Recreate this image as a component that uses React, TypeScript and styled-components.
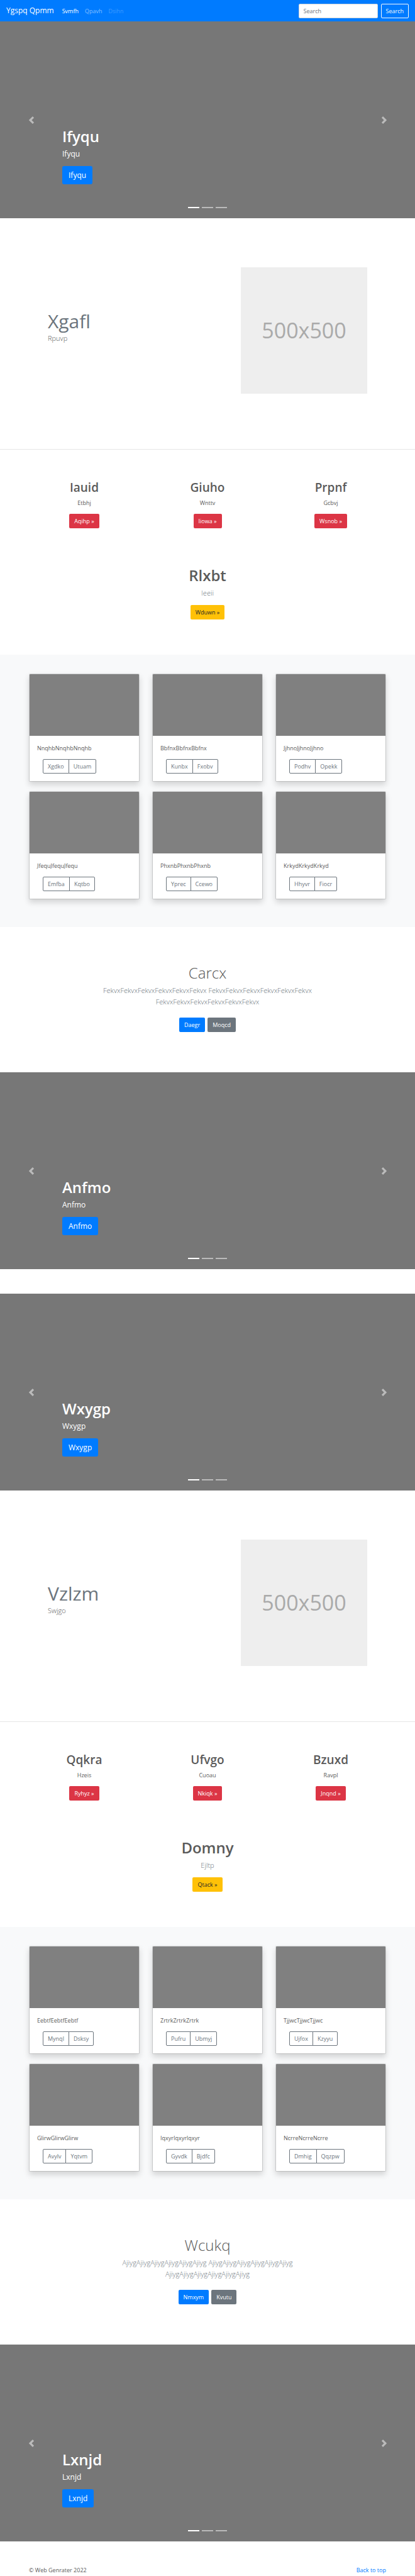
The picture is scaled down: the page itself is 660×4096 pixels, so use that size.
import React from "react";
import styled, { createGlobalStyle, css } from "styled-components";

const GlobalStyle = createGlobalStyle`
  *, *::before, *::after { box-sizing: border-box; }
  body {
    margin: 0;
    background: #fff;
    color: #5a5a5a;
    font-family: "Open Sans", "Noto Sans", sans-serif;
    font-size: 9px;
    line-height: 15px;
  }
  h1, h2, p { margin: 0; }
  a { text-decoration: none; }
`;

const Navbar = styled.nav`
  display: flex;
  align-items: center;
  height: 34px;
  padding: 0 10px;
  background: #007bff;
`;

const Brand = styled.a`
  margin-right: 8px;
  color: #fff;
  font-size: 12px;
  line-height: 18px;
`;

const NavList = styled.ul`
  display: flex;
  flex: 1;
  margin: 0;
  padding: 0;
  list-style: none;
`;

const NavLink = styled.a<{ $tone: number }>`
  display: block;
  padding: 5px;
  color: rgba(255, 255, 255, ${(p) => p.$tone});
`;

const SearchForm = styled.form`
  display: flex;
  gap: 5px;
`;

const SearchInput = styled.input`
  width: 126px;
  height: 23px;
  padding: 0 7px;
  border: 1px solid #ced4da;
  border-radius: 2px;
  background: #fff;
  color: #495057;
  font: inherit;
  &::placeholder { color: #6c757d; opacity: 1; }
`;

const SearchButton = styled.button`
  height: 23px;
  padding: 0 7px;
  border: 1px solid #f8f9fa;
  border-radius: 2px;
  background: transparent;
  color: #f8f9fa;
  font: inherit;
`;

type Tone = "primary" | "secondary" | "danger" | "warning";

const tones: Record<Tone, { bg: string; fg: string }> = {
  primary: { bg: "#007bff", fg: "#fff" },
  secondary: { bg: "#6c757d", fg: "#fff" },
  danger: { bg: "#dc3545", fg: "#fff" },
  warning: { bg: "#ffc107", fg: "#212529" },
};

const Button = styled.a<{ $tone: Tone; $large?: boolean }>`
  display: inline-block;
  padding: 4px 8px;
  border-radius: 2px;
  background: ${(p) => tones[p.$tone].bg};
  color: ${(p) => tones[p.$tone].fg};
  vertical-align: top;
  white-space: nowrap;
  ${(p) =>
    p.$large &&
    css`
      padding: 6px 10px 5px;
      border-radius: 3px;
      font-size: 12px;
      line-height: 18px;
    `}
`;

const Carousel = styled.section`
  position: relative;
  display: flex;
  flex-direction: column;
  align-items: flex-start;
  justify-content: flex-end;
  height: 313px;
  padding: 0 15% 54px;
  background: #777;
  color: #fff;
`;

const SlideTitle = styled.h1`
  margin-bottom: 5px;
  font-size: 24px;
  font-weight: 600;
  line-height: 29px;
`;

const SlideText = styled.p`
  margin-bottom: 10px;
  font-size: 12px;
  line-height: 18px;
`;

const Control = styled.button<{ $side: "left" | "right" }>`
  position: absolute;
  top: 0;
  bottom: 0;
  ${(p) => p.$side}: 0;
  display: flex;
  align-items: center;
  justify-content: center;
  width: 15%;
  padding: 0;
  border: 0;
  background: none;
  opacity: 0.5;
`;

const Indicators = styled.div`
  position: absolute;
  right: 0;
  bottom: 16px;
  left: 0;
  display: flex;
  justify-content: center;
  gap: 4px;
`;

const Indicator = styled.button<{ $active: boolean }>`
  width: 18px;
  height: 2px;
  padding: 0;
  border: 0;
  background: #fff;
  opacity: ${(p) => (p.$active ? 1 : 0.5)};
`;

const Featurette = styled.section`
  display: flex;
  align-items: center;
  justify-content: space-between;
  padding: 78px 76px 88px;
  border-bottom: 1px solid #e6e6e6;
`;

const FeatureCopy = styled.div`
  padding-bottom: 12px;
`;

const FeatureTitle = styled.h2`
  color: #6c757d;
  font-size: 30px;
  font-weight: 400;
  line-height: 37px;
`;

const Lead = styled.p<{ $muted?: boolean }>`
  font-size: 11px;
  font-weight: 300;
  line-height: 18px;
  ${(p) => p.$muted && "color: #6c757d;"}
`;

const Placeholder = styled.div`
  display: flex;
  align-items: center;
  justify-content: center;
  width: 201px;
  aspect-ratio: 1;
  background: #eee;
  color: #aaa;
  font-size: 34px;
`;

const Marketing = styled.section`
  padding: 49px 46px 56px;
  text-align: center;
`;

const Columns = styled.div`
  display: grid;
  grid-template-columns: repeat(3, 1fr);
  gap: 20px;
  margin-bottom: 60px;
`;

const ColumnTitle = styled.h2`
  margin-bottom: 5px;
  font-size: 19px;
  font-weight: 600;
  line-height: 23px;
`;

const ColumnText = styled.p`
  margin-bottom: 10px;
`;

const PromoTitle = styled.h1`
  margin-bottom: 5px;
  font-size: 24px;
  font-weight: 600;
  line-height: 29px;
`;

const PromoText = styled(Lead)`
  margin-bottom: 10px;
`;

const Album = styled.section`
  display: grid;
  grid-template-columns: repeat(3, 1fr);
  gap: 15px 20px;
  padding: 30px 46px 44px;
  background: #f8f9fa;
`;

const Card = styled.article`
  overflow: hidden;
  height: 172px;
  border: 1px solid rgba(0, 0, 0, 0.125);
  border-radius: 2px;
  background: #fff;
  background-clip: padding-box;
  box-shadow: 0 5px 10px rgba(0, 0, 0, 0.15);
`;

const CardImage = styled.div`
  height: 98px;
  background: #808080;
`;

const CardBody = styled.div`
  padding: 12px;
`;

const CardText = styled.p`
  margin-bottom: 10px;
`;

const ButtonGroup = styled.div`
  display: flex;
  padding-left: 9px;
`;

const GroupButton = styled.button`
  height: 23px;
  padding: 0 7px;
  border: 1px solid #6c757d;
  background: #fff;
  color: #6c757d;
  font: inherit;
  &:first-child { border-radius: 2px 0 0 2px; }
  &:last-child { margin-left: -1px; border-radius: 0 2px 2px 0; }
`;

const Jumbotron = styled.section`
  display: flex;
  flex-direction: column;
  align-items: center;
  height: 231px;
  padding: 58px 140px 0;
  text-align: center;
`;

const JumboTitle = styled.h1`
  margin-bottom: 5px;
  font-size: 24px;
  font-weight: 300;
  line-height: 29px;
`;

const Actions = styled.div`
  display: flex;
  gap: 4px;
  margin-top: 16px;
`;

const Spacer = styled.div`
  height: 39px;
`;

const Footer = styled.footer`
  display: flex;
  justify-content: space-between;
  padding: 38px 46px 0;
`;

const FooterLink = styled.a`
  color: #007bff;
`;

function Slide({ name }: { name: string }) {
  return (
    <Carousel>
      <SlideTitle>{name}</SlideTitle>
      <SlideText>{name}</SlideText>
      <Button href="#" $tone="primary" $large>{name}</Button>
      <Control type="button" $side="left" aria-label="Previous">
        <svg width="12" height="12" viewBox="0 0 8 8" fill="#fff">
          <path d="M5.25 0l-4 4 4 4 1.5-1.5L4.25 4l2.5-2.5L5.25 0z" />
        </svg>
      </Control>
      <Control type="button" $side="right" aria-label="Next">
        <svg width="12" height="12" viewBox="0 0 8 8" fill="#fff">
          <path d="M2.75 0l-1.5 1.5L3.75 4l-2.5 2.5L2.75 8l4-4-4-4z" />
        </svg>
      </Control>
      <Indicators>
        {[0, 1, 2].map((i) => (
          <Indicator key={i} type="button" $active={i === 0} aria-label={`Slide ${i + 1}`} />
        ))}
      </Indicators>
    </Carousel>
  );
}

interface BlockData {
  feature: [string, string];
  columns: [string, string, string][];
  promo: [string, string, string];
  cards: [string, string, string][];
  jumbo: { title: string; word: string; actions: [string, string] };
}

function Block({ data }: { data: BlockData }) {
  const phrase = data.jumbo.word.repeat(6);
  return (
    <>
      <Featurette>
        <FeatureCopy>
          <FeatureTitle>{data.feature[0]}</FeatureTitle>
          <Lead>{data.feature[1]}</Lead>
        </FeatureCopy>
        <Placeholder>500x500</Placeholder>
      </Featurette>
      <Marketing>
        <Columns>
          {data.columns.map(([title, text, action]) => (
            <div key={title}>
              <ColumnTitle>{title}</ColumnTitle>
              <ColumnText>{text}</ColumnText>
              <Button href="#" $tone="danger">{action} »</Button>
            </div>
          ))}
        </Columns>
        <PromoTitle>{data.promo[0]}</PromoTitle>
        <PromoText $muted>{data.promo[1]}</PromoText>
        <Button href="#" $tone="warning">{data.promo[2]} »</Button>
      </Marketing>
      <Album>
        {data.cards.map(([word, first, second]) => (
          <Card key={word}>
            <CardImage />
            <CardBody>
              <CardText>{word.repeat(3)}</CardText>
              <ButtonGroup>
                <GroupButton type="button">{first}</GroupButton>
                <GroupButton type="button">{second}</GroupButton>
              </ButtonGroup>
            </CardBody>
          </Card>
        ))}
      </Album>
      <Jumbotron>
        <JumboTitle>{data.jumbo.title}</JumboTitle>
        <Lead $muted>{`${phrase} ${phrase} ${phrase}`}</Lead>
        <Actions>
          <Button href="#" $tone="primary">{data.jumbo.actions[0]}</Button>
          <Button href="#" $tone="secondary">{data.jumbo.actions[1]}</Button>
        </Actions>
      </Jumbotron>
    </>
  );
}

const first: BlockData = {
  feature: ["Xgafl", "Rpuvp"],
  columns: [
    ["Iauid", "Etbhj", "Aqihp"],
    ["Giuho", "Wnttv", "Iiowa"],
    ["Prpnf", "Gcbvj", "Wsnob"],
  ],
  promo: ["Rlxbt", "Ieeii", "Wduwn"],
  cards: [
    ["Nnqhb", "Xgdko", "Utuam"],
    ["Bbfnx", "Kunbx", "Fxobv"],
    ["Jjhno", "Podhv", "Opekk"],
    ["Jfequ", "Emfba", "Kqtbo"],
    ["Phxnb", "Yprec", "Ccewo"],
    ["Krkyd", "Hhyvr", "Fiocr"],
  ],
  jumbo: { title: "Carcx", word: "Fekvx", actions: ["Daegr", "Moqcd"] },
};

const second: BlockData = {
  feature: ["Vzlzm", "Swjgo"],
  columns: [
    ["Qqkra", "Hzeis", "Ryhyz"],
    ["Ufvgo", "Cuoau", "Nkiqk"],
    ["Bzuxd", "Ravpl", "Jnqnd"],
  ],
  promo: ["Domny", "Ejltp", "Qtack"],
  cards: [
    ["Eebtf", "Mynql", "Dsksy"],
    ["Zrtrk", "Pufru", "Ubmyj"],
    ["Tjjwc", "Ujfox", "Kzyyu"],
    ["Glirw", "Avylv", "Yqtvm"],
    ["Iqxyr", "Gyvdk", "Bjdfc"],
    ["Ncrre", "Dmhig", "Qqzpw"],
  ],
  jumbo: { title: "Wcukq", word: "Ajiyg", actions: ["Nmxym", "Kvutu"] },
};

export default function App() {
  return (
    <>
      <GlobalStyle />
      <Navbar>
        <Brand href="#">Ygspq Qpmm</Brand>
        <NavList>
          <li><NavLink href="#" $tone={1}>Svmfh</NavLink></li>
          <li><NavLink href="#" $tone={0.5}>Qpavh</NavLink></li>
          <li><NavLink href="#" $tone={0.25}>Dsihn</NavLink></li>
        </NavList>
        <SearchForm>
          <SearchInput type="text" placeholder="Search" aria-label="Search" />
          <SearchButton type="button">Search</SearchButton>
        </SearchForm>
      </Navbar>
      <main>
        <Slide name="Ifyqu" />
        <Block data={first} />
        <Slide name="Anfmo" />
        <Spacer />
        <Slide name="Wxygp" />
        <Block data={second} />
        <Slide name="Lxnjd" />
      </main>
      <Footer>
        <span>© Web Genrater 2022</span>
        <FooterLink href="#">Back to top</FooterLink>
      </Footer>
    </>
  );
}
